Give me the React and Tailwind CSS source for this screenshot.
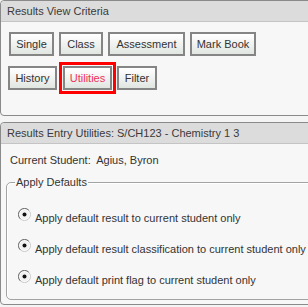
function Btn({ children, active, className = "" }) {
  return (
    <button
      className={
        "h-[24px] border-2 border-[#858585] bg-gradient-to-b from-white to-[#e1e6e1] leading-none text-center " +
        (active ? "text-[#f0325a] " : "text-[#333] ") +
        className
      }
    >
      {children}
    </button>
  );
}

function Radio() {
  return (
    <svg width="13" height="13" viewBox="0 0 13 13" className="shrink-0">
      <circle cx="6.5" cy="6.5" r="6" fill="#fff" stroke="#c8c8c8" />
      <path d="M2.2 10.8 A6 6 0 0 1 10.8 2.2" fill="none" stroke="#6e6e6e" />
      <circle cx="6.5" cy="6.5" r="4.8" fill="#f2f2f2" />
      <circle cx="6.5" cy="6.5" r="2" fill="#111" />
    </svg>
  );
}

export default function App() {
  const options = [
    "Apply default result to current student only",
    "Apply default result classification to current student only",
    "Apply default print flag to current student only",
  ];

  return (
    <div className="w-[308px] h-[307px] overflow-hidden bg-[#f4f4f4] font-['Liberation_Sans',Arial,sans-serif] text-[11px] text-[#333]">
      <div className="w-[340px] border border-[#8a8a8a] rounded-[4px] bg-[#f7f7f7]">
        <div className="h-[21px] bg-[#dcdcdc] border-b border-[#c4c4c4] rounded-t-[4px] pl-[6px] flex items-center text-[#3a3a3a]">
          Results View Criteria
        </div>
        <div className="pt-[10px] pb-[25px] pl-[7px] flex flex-col gap-[10px]">
          <div className="flex gap-[5px] pl-px">
            <Btn className="w-[45px]">Single</Btn>
            <Btn className="w-[44px]">Class</Btn>
            <Btn className="w-[77px]">Assessment</Btn>
            <Btn className="w-[66px]">Mark Book</Btn>
          </div>
          <div className="flex gap-[5px]">
            <Btn className="w-[49px]">History</Btn>
            <div className="relative ml-px">
              <Btn active className="w-[49px]">Utilities</Btn>
              <span className="absolute -inset-[4px] border-[3px] border-[#ff0000] pointer-events-none" />
            </div>
            <Btn className="w-[40px]">Filter</Btn>
          </div>
        </div>
      </div>

      <div className="mt-[6px] w-[340px] border border-[#8a8a8a] rounded-[4px] bg-[#f7f7f7]">
        <div className="h-[21px] bg-[#dcdcdc] border-b border-[#c4c4c4] rounded-t-[4px] pl-[6px] flex items-center text-[#3a3a3a]">
          Results Entry Utilities: S/CH123 - Chemistry 1 3
        </div>
        <div className="px-[5px] pt-[10px] pb-[4px]">
          <div className="pl-[4px] leading-[13px]">Current Student:&nbsp; Agius, Byron</div>
          <fieldset className="mt-[9px] border border-[#a3a3a3] rounded-[5px] pl-[8px] pt-[19px] pb-[12px] shadow-[inset_1px_1px_0_#fff]">
            <legend className="px-px leading-[13px]">Apply Defaults</legend>
            <div className="flex flex-col gap-[14px] pl-[3px]">
              {options.map((o) => (
                <div key={o} className="flex items-start gap-[4px]">
                  <Radio />
                  <span className="mt-[4px] leading-[13px] whitespace-nowrap">{o}</span>
                </div>
              ))}
            </div>
          </fieldset>
        </div>
      </div>
    </div>
  );
}
